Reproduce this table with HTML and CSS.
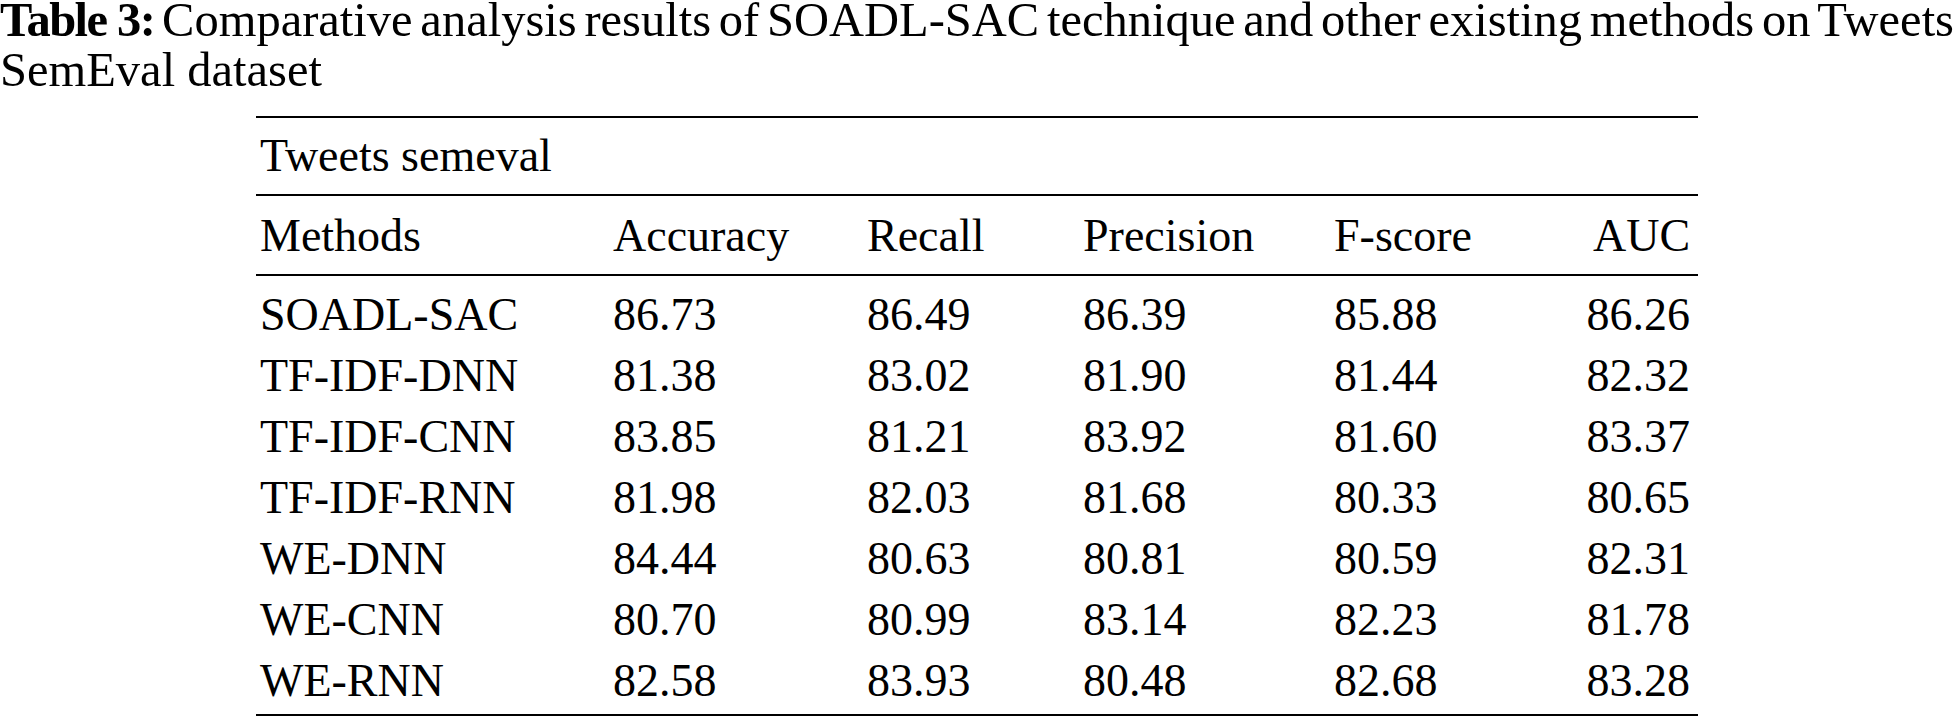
FILE: index.html
```html
<!DOCTYPE html>
<html lang="en">
<head>
<meta charset="utf-8">
<title>Table 3</title>
<link rel="stylesheet" href="styles.css">
</head>
<body>
<div class="page">
  <p class="caption"><b class="label">Table 3:</b> Comparative analysis results of SOADL-SAC technique and other existing methods on Tweets SemEval dataset</p>
  <table class="results">
    <colgroup>
      <col class="c-method">
      <col class="c-acc">
      <col class="c-rec">
      <col class="c-prec">
      <col class="c-f">
      <col class="c-auc">
    </colgroup>
    <thead>
      <tr class="group"><th colspan="6">Tweets semeval</th></tr>
      <tr class="cols">
        <th>Methods</th><th>Accuracy</th><th>Recall</th><th>Precision</th><th>F-score</th><th class="r">AUC</th>
      </tr>
    </thead>
    <tbody>
      <tr class="first"><td>SOADL-SAC</td><td>86.73</td><td>86.49</td><td>86.39</td><td>85.88</td><td class="r">86.26</td></tr>
      <tr><td>TF-IDF-DNN</td><td>81.38</td><td>83.02</td><td>81.90</td><td>81.44</td><td class="r">82.32</td></tr>
      <tr><td>TF-IDF-CNN</td><td>83.85</td><td>81.21</td><td>83.92</td><td>81.60</td><td class="r">83.37</td></tr>
      <tr><td>TF-IDF-RNN</td><td>81.98</td><td>82.03</td><td>81.68</td><td>80.33</td><td class="r">80.65</td></tr>
      <tr><td>WE-DNN</td><td>84.44</td><td>80.63</td><td>80.81</td><td>80.59</td><td class="r">82.31</td></tr>
      <tr><td>WE-CNN</td><td>80.70</td><td>80.99</td><td>83.14</td><td>82.23</td><td class="r">81.78</td></tr>
      <tr class="last"><td>WE-RNN</td><td>82.58</td><td>83.93</td><td>80.48</td><td>82.68</td><td class="r">83.28</td></tr>
    </tbody>
  </table>
</div>
</body>
</html>
```
FILE: styles.css
```css
html, body {
  margin: 0;
  padding: 0;
  background: #ffffff;
}

.page {
  width: 1954px;
  font-family: "Liberation Serif", "Times New Roman", serif;
  color: #000000;
}

.caption {
  margin: -5px 0 0 0;
  font-size: 48.5px;
  line-height: 50px;
  text-align: justify;
}

.caption::first-line {
  word-spacing: -6px;
}

.caption .label {
  font-weight: bold;
  letter-spacing: -1.5px;
  word-spacing: -2px;
}

.results {
  margin: 21px 0 0 256px;
  width: 1442px;
  table-layout: fixed;
  border-collapse: collapse;
  font-size: 46px;
  border-top: 2px solid #000;
  border-bottom: 2px solid #000;
}

.c-method { width: 353px; }
.c-acc { width: 254px; }
.c-rec { width: 216px; }
.c-prec { width: 251px; }
.c-f { width: 200px; }
.c-auc { width: 168px; }

.results th,
.results td {
  font-weight: normal;
  text-align: left;
  white-space: nowrap;
  line-height: 61px;
  padding: 0 0 0 4px;
}

.results .r {
  text-align: right;
  padding: 0 8px 0 0;
}

.results .group {
  border-bottom: 2px solid #000;
}

.results .group th {
  padding-top: 7px;
  padding-bottom: 8px;
}

.results .cols {
  border-bottom: 2px solid #000;
}

.results .cols th {
  padding-top: 9px;
  padding-bottom: 8px;
}

.results .first td {
  padding-top: 8px;
}

.results .last td {
  padding-bottom: 3px;
}
```
